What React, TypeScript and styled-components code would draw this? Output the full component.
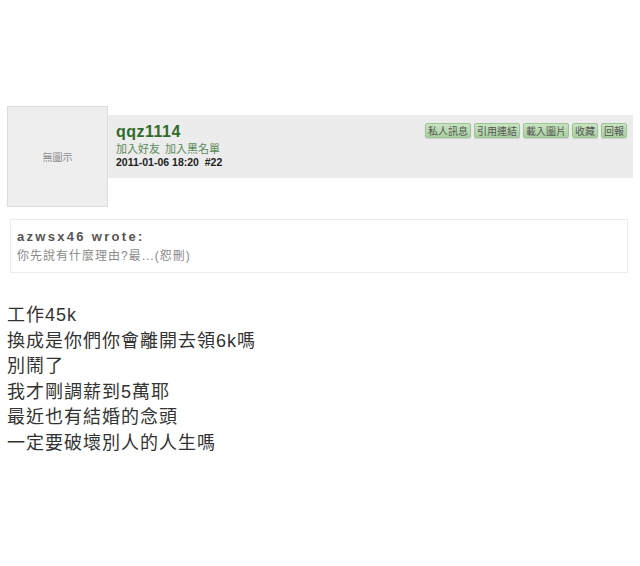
import React from 'react';
import styled, { createGlobalStyle } from 'styled-components';

const GlobalStyle = createGlobalStyle`
  html, body {
    margin: 0;
    padding: 0;
    background: #ffffff;
  }
  body {
    font-family: "Liberation Sans", "Noto Sans CJK TC", sans-serif;
    color: #333333;
  }
`;

const Page = styled.div`
  width: 626px;
  padding: 106px 7px 0 7px;
`;

const PostHeader = styled.div`
  display: flex;
  align-items: flex-start;
`;

const Avatar = styled.div`
  width: 99px;
  height: 99px;
  flex: none;
  display: flex;
  align-items: center;
  justify-content: center;
  background: #eeeeee;
  border: 1px solid #dcdcdc;
  font-size: 10px;
  color: #8a8a8a;
`;

const InfoBar = styled.div`
  flex: 1;
  height: 63px;
  margin-top: 9px;
  background: #ececec;
  display: flex;
  justify-content: space-between;
  padding: 0 6px 0 8px;
`;

const UserBlock = styled.div`
  display: flex;
  flex-direction: column;
  padding-top: 7px;
`;

const UserName = styled.div`
  font-size: 16px;
  font-weight: bold;
  color: #2f6a2f;
  line-height: 19px;
  letter-spacing: 0.5px;
`;

const Links = styled.div`
  margin-top: 2px;
  display: flex;
  gap: 5px;
  font-size: 11px;
  line-height: 13px;
  color: #5a8a5a;
`;

const DateLine = styled.div`
  font-size: 10.5px;
  line-height: 13px;
  color: #222222;
  font-weight: bold;
`;

const Actions = styled.div`
  display: flex;
  gap: 3px;
  padding-top: 8px;
  align-items: flex-start;
`;

const ActionButton = styled.span`
  display: inline-flex;
  align-items: center;
  height: 13px;
  padding: 0 2px;
  font-size: 10px;
  color: #555555;
  background: linear-gradient(#c9e4c2, #a8cfa0);
  border: 1px solid #9cc494;
  border-radius: 2px;
  box-shadow: 0 1px 1px rgba(0, 0, 0, 0.12);
`;

const Quote = styled.div`
  margin: 12px 5px 0 3px;
  border: 1px solid #ececec;
  padding: 8px 6px 6px 6px;
`;

const QuoteAuthor = styled.div`
  font-size: 13px;
  font-weight: bold;
  letter-spacing: 2.3px;
  color: #555555;
  line-height: 18px;
`;

const QuoteText = styled.div`
  font-size: 12px;
  letter-spacing: 1px;
  color: #8a8a8a;
  line-height: 20px;
`;

const Body = styled.div`
  margin-top: 30px;
  font-size: 18px;
  letter-spacing: 1px;
  line-height: 25.6px;
  color: #333333;
`;

const actions = ['私人訊息', '引用連結', '載入圖片', '收藏', '回報'];

const lines = [
  '工作45k',
  '換成是你們你會離開去領6k嗎',
  '別鬧了',
  '我才剛調薪到5萬耶',
  '最近也有結婚的念頭',
  '一定要破壞別人的人生嗎',
];

export default function App() {
  return (
    <>
      <GlobalStyle />
      <Page>
        <PostHeader>
          <Avatar>無圖示</Avatar>
          <InfoBar>
            <UserBlock>
              <UserName>qqz1114</UserName>
              <Links>
                <span>加入好友</span>
                <span>加入黑名單</span>
              </Links>
              <DateLine>2011-01-06 18:20&nbsp;&nbsp;#22</DateLine>
            </UserBlock>
            <Actions>
              {actions.map((a) => (
                <ActionButton key={a}>{a}</ActionButton>
              ))}
            </Actions>
          </InfoBar>
        </PostHeader>
        <Quote>
          <QuoteAuthor>azwsx46 wrote:</QuoteAuthor>
          <QuoteText>你先說有什麼理由?最...(恕刪)</QuoteText>
        </Quote>
        <Body>
          {lines.map((l) => (
            <div key={l}>{l}</div>
          ))}
        </Body>
      </Page>
    </>
  );
}
